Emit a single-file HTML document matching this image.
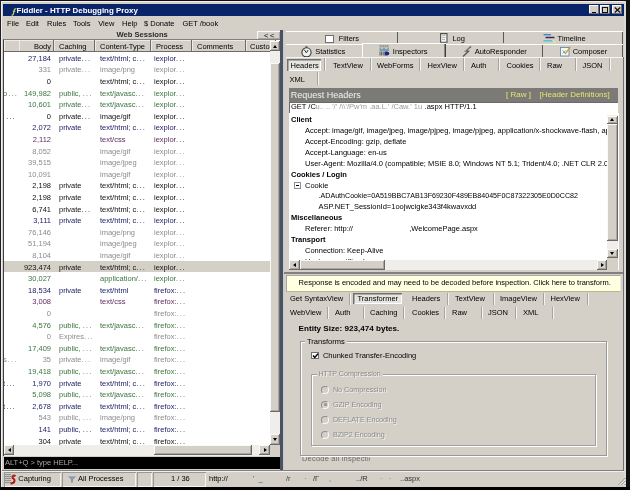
<!DOCTYPE html>
<html><head><meta charset="utf-8">
<style>
html,body{margin:0;padding:0;width:630px;height:490px;overflow:hidden;background:#000;}
*{box-sizing:border-box;}
#w{will-change:transform;position:absolute;left:0;top:0;width:630px;height:490px;background:#d4d0c8;font-family:"Liberation Sans",sans-serif;font-size:7.5px;color:#000;overflow:hidden;}
.a{position:absolute;}
.t{position:absolute;white-space:pre;line-height:12px;height:12px;}
.b{font-weight:bold;}
.raised{box-shadow:inset -1px -1px #6a6a6a, inset 1px 1px #fafafa, inset -2px -2px #a8a6a0;background:#d4d0c8;}
.sunk{box-shadow:inset 1px 1px #9a9892, inset -1px -1px #f4f4f0;}
/* list */
#list{position:absolute;left:3px;top:39px;width:278px;height:417px;background:#fff;border-left:1px solid #404040;border-top:1px solid #808080;overflow:hidden;}
.r{position:absolute;left:0;width:266px;height:11.62px;line-height:13.2px;white-space:pre;}
.r span{position:absolute;top:0;overflow:hidden;}
.c0{left:-1px;width:15px;letter-spacing:1.1px;}
.c1{left:15px;width:32px;text-align:right;}
.c2{left:55px;width:38px;}
.c3{left:96px;width:52px;}
.c4{left:150px;width:46px;}
.r i{font-style:normal;letter-spacing:1.1px;}
.n{color:#22226a;} .g{color:#8c8c8c;} .k{color:#101010;} .e{color:#3c7440;} .p{color:#5e2c5e;}
.s{background:#d4d0c8;color:#101010;}
.hd{position:absolute;top:0;height:12px;line-height:14px;white-space:pre;background:#d4d0c8;box-shadow:inset -1px -1px #6c6c6c, inset 1px 1px #ecebe6;}
.arrow{position:absolute;width:0;height:0;}
.tab{position:absolute;white-space:pre;}
.sep{position:absolute;width:1px;background:#a4a4a0;box-shadow:1px 0 #f4f4f4;}
</style></head><body>
<div id="w">
  <!-- outer frame -->
  <div class="a" style="left:0;top:0;width:630px;height:1px;background:#101010"></div>
  <div class="a" style="left:0;top:0;width:1px;height:490px;background:#202020"></div>
  <div class="a" style="left:626px;top:0;width:4px;height:490px;background:#101010"></div>
  <div class="a" style="left:0;top:487px;width:630px;height:3px;background:#000"></div>
  <div class="a" style="left:1px;top:1px;width:1px;height:486px;background:#f0f0f0"></div>
  <div class="a" style="left:1px;top:1px;width:625px;height:1px;background:#f0f0f0"></div>
  <div class="a" style="left:624.3px;top:1px;width:1.7px;height:486px;background:#dcdad4"></div>

  <!-- title bar -->
  <div class="a" style="left:3px;top:4px;width:621px;height:12px;background:#0a246a"></div>
  <svg class="a" style="left:10.5px;top:8px" width="6" height="8" viewBox="0 0 6 8"><path d="M5.3 0.9 C4.2 0.4 3.5 1.2 3.2 2.4 L2.4 5.8 C2.1 7 1.4 7.3 0.5 7" stroke="#c8d868" stroke-width="1.2" fill="none"/><path d="M1.8 3.3 L4.4 3.3" stroke="#c8d868" stroke-width="0.9"/></svg>
  <div class="t b" style="left:16.6px;top:4.6px;color:#fff;font-size:7.9px">Fiddler - HTTP Debugging Proxy</div>
  <div class="a raised" style="left:589px;top:5px;width:9.7px;height:9.3px;box-shadow:inset -1px -1px #707070, inset 1px 1px #fff"></div>
  <div class="a" style="left:592px;top:11.6px;width:4px;height:1.4px;background:#000"></div>
  <div class="a raised" style="left:600px;top:5px;width:9.7px;height:9.3px;box-shadow:inset -1px -1px #707070, inset 1px 1px #fff"></div>
  <div class="a" style="left:602px;top:7px;width:6px;height:5.8px;border:1.1px solid #101010;border-top-width:1.8px"></div>
  <div class="a raised" style="left:611.7px;top:5px;width:10.6px;height:9.3px;box-shadow:inset -1px -1px #707070, inset 1px 1px #fff"></div>
  <svg class="a" style="left:614.2px;top:6.8px" width="7" height="6" viewBox="0 0 7 6"><path d="M0.8 0.5 L6.2 5.5 M6.2 0.5 L0.8 5.5" stroke="#101010" stroke-width="1.2"/></svg>

  <!-- menu -->
  <div class="t" style="left:7px;top:17.5px">File</div>
  <div class="t" style="left:26px;top:17.5px">Edit</div>
  <div class="t" style="left:47px;top:17.5px">Rules</div>
  <div class="t" style="left:73px;top:17.5px">Tools</div>
  <div class="t" style="left:98.2px;top:17.5px">View</div>
  <div class="t" style="left:122px;top:17.5px">Help</div>
  <div class="t" style="left:144px;top:17.5px">$ Donate</div>
  <div class="t" style="left:182.5px;top:17.5px">GET /book</div>

  <!-- web sessions caption -->
  <div class="t b" style="left:116.5px;top:29.3px;font-size:7.6px;color:#2a2a2a">Web Sessions</div>
  <div class="a raised" style="left:257px;top:30.5px;width:24px;height:9px"></div>
  <div class="t" style="left:264px;top:30.5px;font-size:7.5px;line-height:10px;letter-spacing:1.5px">&lt;&lt;</div>

  <!-- sessions list -->
  <div id="list">
    <div class="hd" style="left:0;width:16px"></div>
    <div class="hd" style="left:15px;width:35px;text-align:right;padding-right:3px">Body</div>
    <div class="hd" style="left:50px;width:41px;padding-left:5px">Caching</div>
    <div class="hd" style="left:91px;width:56px;padding-left:5px">Content-Type</div>
    <div class="hd" style="left:147px;width:41px;padding-left:5px">Process</div>
    <div class="hd" style="left:188px;width:54px;padding-left:5px">Comments</div>
    <div class="hd" style="left:242px;width:30px;padding-left:4px">Custo</div>
<div class="r n" style="top:11.80px"><span class="c0"></span><span class="c1">27,184</span><span class="c2">private<i>...</i></span><span class="c3">text/html; c<i>...</i></span><span class="c4">iexplor<i>...</i></span></div>
<div class="r g" style="top:23.40px"><span class="c0"></span><span class="c1">331</span><span class="c2">private<i>...</i></span><span class="c3">image/png</span><span class="c4">iexplor<i>...</i></span></div>
<div class="r k" style="top:35.00px"><span class="c0"></span><span class="c1">0</span><span class="c2"></span><span class="c3">text/html; c<i>...</i></span><span class="c4">iexplor<i>...</i></span></div>
<div class="r e" style="top:46.60px"><span class="c0">o<i>...</i></span><span class="c1">149,982</span><span class="c2">public, <i>...</i></span><span class="c3">text/javasc<i>...</i></span><span class="c4">iexplor<i>...</i></span></div>
<div class="r e" style="top:58.20px"><span class="c0"></span><span class="c1">10,601</span><span class="c2">private<i>...</i></span><span class="c3">text/javasc<i>...</i></span><span class="c4">iexplor<i>...</i></span></div>
<div class="r k" style="top:69.80px"><span class="c0"> <i>...</i></span><span class="c1">0</span><span class="c2">private<i>...</i></span><span class="c3">image/gif</span><span class="c4">iexplor<i>...</i></span></div>
<div class="r n" style="top:81.40px"><span class="c0"></span><span class="c1">2,072</span><span class="c2">private</span><span class="c3">text/html; c<i>...</i></span><span class="c4">iexplor<i>...</i></span></div>
<div class="r p" style="top:93.00px"><span class="c0"></span><span class="c1">2,112</span><span class="c2"></span><span class="c3">text/css</span><span class="c4">iexplor<i>...</i></span></div>
<div class="r g" style="top:104.60px"><span class="c0"></span><span class="c1">8,052</span><span class="c2"></span><span class="c3">image/gif</span><span class="c4">iexplor<i>...</i></span></div>
<div class="r g" style="top:116.20px"><span class="c0"></span><span class="c1">39,515</span><span class="c2"></span><span class="c3">image/jpeg</span><span class="c4">iexplor<i>...</i></span></div>
<div class="r g" style="top:127.80px"><span class="c0"></span><span class="c1">10,091</span><span class="c2"></span><span class="c3">image/gif</span><span class="c4">iexplor<i>...</i></span></div>
<div class="r k" style="top:139.40px"><span class="c0"></span><span class="c1">2,198</span><span class="c2">private</span><span class="c3">text/html; c<i>...</i></span><span class="c4">iexplor<i>...</i></span></div>
<div class="r k" style="top:151.00px"><span class="c0"></span><span class="c1">2,198</span><span class="c2">private</span><span class="c3">text/html; c<i>...</i></span><span class="c4">iexplor<i>...</i></span></div>
<div class="r k" style="top:162.60px"><span class="c0"></span><span class="c1">6,741</span><span class="c2">private<i>...</i></span><span class="c3">text/html; c<i>...</i></span><span class="c4">iexplor<i>...</i></span></div>
<div class="r n" style="top:174.20px"><span class="c0"></span><span class="c1">3,111</span><span class="c2">private</span><span class="c3">text/html; c<i>...</i></span><span class="c4">iexplor<i>...</i></span></div>
<div class="r g" style="top:185.80px"><span class="c0"></span><span class="c1">76,146</span><span class="c2"></span><span class="c3">image/png</span><span class="c4">iexplor<i>...</i></span></div>
<div class="r g" style="top:197.40px"><span class="c0"></span><span class="c1">51,194</span><span class="c2"></span><span class="c3">image/jpeg</span><span class="c4">iexplor<i>...</i></span></div>
<div class="r g" style="top:209.00px"><span class="c0"></span><span class="c1">8,104</span><span class="c2"></span><span class="c3">image/gif</span><span class="c4">iexplor<i>...</i></span></div>
<div class="r s" style="top:220.60px"><span class="c0"></span><span class="c1">923,474</span><span class="c2">private</span><span class="c3">text/html; c<i>...</i></span><span class="c4">iexplor<i>...</i></span></div>
<div class="r e" style="top:232.20px"><span class="c0"></span><span class="c1">30,027</span><span class="c2"></span><span class="c3">application/<i>...</i></span><span class="c4">iexplor<i>...</i></span></div>
<div class="r n" style="top:243.80px"><span class="c0"></span><span class="c1">18,534</span><span class="c2">private</span><span class="c3">text/html</span><span class="c4">firefox:<i>...</i></span></div>
<div class="r p" style="top:255.40px"><span class="c0"></span><span class="c1">3,008</span><span class="c2"></span><span class="c3">text/css</span><span class="c4">firefox:<i>...</i></span></div>
<div class="r g" style="top:267.00px"><span class="c0"></span><span class="c1">0</span><span class="c2"></span><span class="c3"></span><span class="c4">firefox:<i>...</i></span></div>
<div class="r e" style="top:278.60px"><span class="c0"></span><span class="c1">4,576</span><span class="c2">public, <i>...</i></span><span class="c3">text/javasc<i>...</i></span><span class="c4">firefox:<i>...</i></span></div>
<div class="r g" style="top:290.20px"><span class="c0"></span><span class="c1">0</span><span class="c2">Expires<i>...</i></span><span class="c3"></span><span class="c4">firefox:<i>...</i></span></div>
<div class="r e" style="top:301.80px"><span class="c0"></span><span class="c1">17,409</span><span class="c2">public, <i>...</i></span><span class="c3">text/javasc<i>...</i></span><span class="c4">firefox:<i>...</i></span></div>
<div class="r g" style="top:313.40px"><span class="c0">s<i>...</i></span><span class="c1">35</span><span class="c2">private<i>...</i></span><span class="c3">image/gif</span><span class="c4">firefox:<i>...</i></span></div>
<div class="r e" style="top:325.00px"><span class="c0"></span><span class="c1">19,418</span><span class="c2">public, <i>...</i></span><span class="c3">text/javasc<i>...</i></span><span class="c4">firefox:<i>...</i></span></div>
<div class="r n" style="top:336.60px"><span class="c0">t<i>...</i></span><span class="c1">1,970</span><span class="c2">private</span><span class="c3">text/html; c<i>...</i></span><span class="c4">firefox:<i>...</i></span></div>
<div class="r e" style="top:348.20px"><span class="c0"></span><span class="c1">5,098</span><span class="c2">public, <i>...</i></span><span class="c3">text/javasc<i>...</i></span><span class="c4">firefox:<i>...</i></span></div>
<div class="r n" style="top:359.80px"><span class="c0">t<i>...</i></span><span class="c1">2,678</span><span class="c2">private</span><span class="c3">text/html; c<i>...</i></span><span class="c4">firefox:<i>...</i></span></div>
<div class="r g" style="top:371.40px"><span class="c0"></span><span class="c1">543</span><span class="c2">public, <i>...</i></span><span class="c3">image/png</span><span class="c4">firefox:<i>...</i></span></div>
<div class="r n" style="top:383.00px"><span class="c0"></span><span class="c1">141</span><span class="c2">public, <i>...</i></span><span class="c3">text/html; c<i>...</i></span><span class="c4">firefox:<i>...</i></span></div>
<div class="r k" style="top:394.60px"><span class="c0"></span><span class="c1">304</span><span class="c2">private</span><span class="c3">text/html; c<i>...</i></span><span class="c4">firefox:<i>...</i></span></div>
    <!-- vscroll -->
    <div class="a" style="left:266px;top:1px;width:11px;height:404px;background:#efeeea"></div>
    <div class="a raised" style="left:266px;top:1px;width:10px;height:10px"></div>
    <div class="a" style="left:269px;top:4.5px;width:0;height:0;border-left:2.5px solid transparent;border-right:2.5px solid transparent;border-bottom:3px solid #000"></div>
    <div class="a raised" style="left:266px;top:23px;width:10px;height:349px"></div>
    <div class="a raised" style="left:266px;top:394px;width:10px;height:10.8px"></div>
    <div class="a" style="left:269px;top:398px;width:0;height:0;border-left:2.5px solid transparent;border-right:2.5px solid transparent;border-top:3px solid #000"></div>
    <!-- hscroll -->
    <div class="a" style="left:0;top:404.8px;width:277px;height:12.2px;background:#efeeea"></div>
    <div class="a raised" style="left:0;top:404.8px;width:10px;height:10.7px"></div>
    <div class="a" style="left:3.5px;top:408px;width:0;height:0;border-top:2.5px solid transparent;border-bottom:2.5px solid transparent;border-right:3px solid #000"></div>
    <div class="a raised" style="left:150px;top:404.8px;width:98px;height:10.7px"></div>
    <div class="a raised" style="left:255px;top:404.8px;width:11px;height:10.7px"></div>
    <div class="a" style="left:259.5px;top:408px;width:0;height:0;border-top:2.5px solid transparent;border-bottom:2.5px solid transparent;border-left:3px solid #000"></div>
    <div class="a" style="left:266px;top:404.8px;width:12px;height:12.2px;background:#d4d0c8"></div>
  </div>
  <!-- splitter -->
  <div class="a" style="left:280px;top:30px;width:3px;height:441px;background:#4a5262"></div><div class="a" style="left:283px;top:30px;width:2px;height:441px;background:linear-gradient(90deg,#c4c8d0,#d4d0c8)"></div>

  <!-- quickexec -->
  <div class="a" style="left:4px;top:457px;width:276px;height:11.8px;background:#000"></div>
  <div class="t" style="left:5px;top:456.8px;color:#a8a8a8">ALT+Q &gt; type HELP...</div>

  <!-- status bar -->
  <div class="a" style="left:2px;top:470px;width:622px;height:1px;background:#808080"></div><div class="a" style="left:2px;top:471px;width:622px;height:1px;background:#f0f0f0"></div>
  <div class="a sunk" style="left:4px;top:472px;width:57px;height:15px"></div>
  <svg class="a" style="left:4px;top:473px" width="13" height="12" viewBox="0 0 13 12"><path d="M1 1.5h6M1 3.5h6M1 5.5h6M1 7.5h6M1 9.5h6" stroke="#8a8a8a" stroke-width="1"/><path d="M2.5 1v10M5 1v10" stroke="#b0b0b0" stroke-width="0.6"/><path d="M11.5 3 C9.5 2 8 3 8.5 4.5 C9 6 11 6 10.5 8 C10 10 8 10.5 6.5 10.5" stroke="#b01818" stroke-width="2" fill="none"/></svg>
  <div class="t" style="left:18.3px;top:473px">Capturing</div>
  <div class="a sunk" style="left:62px;top:472px;width:74px;height:15px"></div>
  <svg class="a" style="left:67px;top:475px" width="10" height="8" viewBox="0 0 10 8"><path d="M0.5 1 L9.5 1 L6 4.5 L6 7.5 L4 7.5 L4 4.5 Z" fill="#8a98b0"/><path d="M0.5 1 L9.5 1" stroke="#c8d0e0" stroke-width="0.8"/></svg>
  <div class="t" style="left:78px;top:473px">All Processes</div>
  <div class="a sunk" style="left:137px;top:472px;width:15px;height:15px"></div>
  <div class="a sunk" style="left:153px;top:472px;width:53px;height:15px"></div>
  <div class="t" style="left:171px;top:473px">1 / 36</div>
  <div class="t" style="left:209px;top:473px">http://</div>
  <div class="t" style="left:253px;top:473px;color:#555">'  _</div>
  <div class="t" style="left:286px;top:473px;color:#444">/r</div>
  <div class="t" style="left:304px;top:473px;color:#777">·</div>
  <div class="t" style="left:313px;top:473px;color:#333">/Γ</div>
  <div class="t" style="left:329px;top:473px;color:#777">,</div>
  <div class="t" style="left:356px;top:473px;color:#333">../R</div>
  <div class="t" style="left:380px;top:473px;color:#888">·   ·</div>
  <div class="t" style="left:400px;top:473px;color:#333">..aspx</div>
  <svg class="a" style="left:617px;top:476px" width="9" height="10" viewBox="0 0 9 10"><path d="M8.5 2 L1.5 9 M8.5 5 L4.5 9 M8.5 8 L7.5 9" stroke="#808080" stroke-width="1"/><path d="M8.5 3 L2.5 9 M8.5 6 L5.5 9" stroke="#fff" stroke-width="0.8"/></svg>

    <!-- RIGHT PANEL -->
  <!-- tab row 1 -->
  <div class="a" style="left:285.5px;top:31px;width:337px;height:13px;background:#d4d0c8;box-shadow:inset 0 1px #fff"></div>
  <div class="a" style="left:397px;top:32px;width:1.2px;height:11px;background:#5a5a5a"></div>
  <div class="a" style="left:503.2px;top:32px;width:1.2px;height:11px;background:#5a5a5a"></div>
  <div class="a" style="left:621.8px;top:32px;width:1.2px;height:12px;background:#5a5a5a"></div>
  <div class="a" style="left:325.3px;top:34.5px;width:9px;height:8.5px;background:#fff;border:1px solid #707070"></div>
  <div class="t" style="left:338.7px;top:32.7px">Filters</div>
  <svg class="a" style="left:439.5px;top:33px" width="8" height="10" viewBox="0 0 8 10"><path d="M0.6 0.6 H7 V9.2 H0.6 Z" fill="#f4f4f4" stroke="#505050" stroke-width="1.1"/><path d="M2 2.5h3.5M2 4.5h3.5M2 6.5h3" stroke="#a8a8a8" stroke-width="0.8"/></svg>
  <div class="t" style="left:452.4px;top:33px">Log</div>
  <svg class="a" style="left:542.5px;top:33px" width="14" height="11" viewBox="0 0 14 11"><path d="M0.5 1.7h7.5" stroke="#4a84c8" stroke-width="1.4"/><path d="M2.5 4.5h9" stroke="#4a2058" stroke-width="1.5"/><path d="M0.5 7.8h10" stroke="#50c8c8" stroke-width="1.5"/><path d="M9.5 7 l3 3" stroke="#d8e8b0" stroke-width="1.5"/></svg>
  <div class="t" style="left:557.6px;top:33px">Timeline</div>
  <!-- tab row 2 -->
  <div class="a" style="left:285.5px;top:44px;width:337px;height:13.5px;background:#d4d0c8;box-shadow:inset 0 1px #fff"></div>
  <div class="a" style="left:362px;top:43px;width:83.5px;height:15px;background:#d4d0c8;box-shadow:inset 1px 1px #fff, inset -1.5px 0 #404040"></div>
  <div class="a" style="left:542.2px;top:44.5px;width:1.2px;height:13px;background:#5a5a5a"></div>
  <div class="a" style="left:621.8px;top:44.5px;width:1.2px;height:13px;background:#5a5a5a"></div>
  <svg class="a" style="left:301px;top:45.5px" width="12" height="12" viewBox="0 0 12 12"><circle cx="5.5" cy="6.3" r="4.6" fill="#eef2ea" stroke="#383838" stroke-width="1.1"/><path d="M3.2 3.6 L5.4 6.8 L7.2 4" stroke="#303030" stroke-width="1" fill="none"/><path d="M4.6 1 h1.8" stroke="#303030" stroke-width="1.2"/></svg>
  <div class="t" style="left:315.2px;top:46.3px">Statistics</div>
  <svg class="a" style="left:378.7px;top:44.8px" width="11" height="11" viewBox="0 0 11 11"><path d="M0.5 1h9.5" stroke="#505050" stroke-width="1" stroke-dasharray="1.2 0.6"/><rect x="0.5" y="2.5" width="9.5" height="3.5" fill="#7aa0ac"/><path d="M2 3.2h2M6 3.2h2.5" stroke="#d8e8ec" stroke-width="0.9"/><path d="M1 6.5v4M2.6 6.5v4M4.2 6.5v4" stroke="#505058" stroke-width="0.9"/><path d="M5.5 6.5 h3 q1.8 0.5 1.8 2 q0 2 -2.5 2 h-2.3z" fill="#20287a"/></svg>
  <div class="t" style="left:392.8px;top:45.5px">Inspectors</div>
  <svg class="a" style="left:462px;top:45.5px" width="10" height="11" viewBox="0 0 10 11"><path d="M9 0.5 L3.5 5 L6.5 5.2 L1 10.5" stroke="#555" stroke-width="1.3" fill="none"/><path d="M7.5 1 L2.5 5.5" stroke="#b0b0b0" stroke-width="1"/></svg>
  <div class="t" style="left:474.7px;top:46.3px">AutoResponder</div>
  <svg class="a" style="left:559.5px;top:46px" width="12" height="11" viewBox="0 0 12 11"><rect x="0.5" y="1.5" width="8.5" height="8.5" fill="#f4f6f8" stroke="#7088a8" stroke-width="0.9"/><path d="M2.5 4.5 L5.5 7.5 M5.5 4.5 L2.5 7.5" stroke="#80a860" stroke-width="0.9"/><path d="M5 8 L10.5 0.8" stroke="#c8a040" stroke-width="1.3"/><path d="M9.5 0.5 L11 1.8" stroke="#e0a0b0" stroke-width="1"/></svg>
  <div class="t" style="left:572.7px;top:46.3px">Composer</div>
  <div class="a" style="left:623px;top:57px;width:1.3px;height:414px;background:#707070"></div>
  <div class="a" style="left:285.5px;top:57px;width:337.5px;height:1px;background:#f4f4f4"></div>
  <!-- tab row 3 (inspector sub tabs) -->
  <div class="a" style="left:286.7px;top:59.3px;width:34.5px;height:11.5px;background:#e6e4df;box-shadow:inset 1.5px 1.5px #707070, inset -1px -1px #fff"></div>
  <div class="t" style="left:290.5px;top:60px">Headers</div>
  <div class="sep" style="left:323.8px;top:58px;height:13px"></div>
  <div class="t" style="left:333px;top:60px">TextView</div>
  <div class="sep" style="left:370px;top:58px;height:13px"></div>
  <div class="t" style="left:377px;top:60px">WebForms</div>
  <div class="sep" style="left:419.3px;top:58px;height:13px"></div>
  <div class="t" style="left:427.5px;top:60px">HexView</div>
  <div class="sep" style="left:462.7px;top:58px;height:13px"></div>
  <div class="t" style="left:471px;top:60px">Auth</div>
  <div class="sep" style="left:498.3px;top:58px;height:13px"></div>
  <div class="t" style="left:506.5px;top:60px">Cookies</div>
  <div class="sep" style="left:538.5px;top:58px;height:13px"></div>
  <div class="t" style="left:547px;top:60px">Raw</div>
  <div class="sep" style="left:574.6px;top:58px;height:13px"></div>
  <div class="t" style="left:582.5px;top:60px">JSON</div>
  <div class="sep" style="left:609.0px;top:58px;height:13px"></div>
  <div class="t" style="left:289.5px;top:74.3px">XML</div>
  <div class="sep" style="left:317px;top:72px;height:13px"></div>

  <!-- request headers -->
  <div class="a" style="left:288.8px;top:88px;width:329.7px;height:13.6px;background:#7b7a77"></div>
  <div class="t" style="left:290.7px;top:89px;font-size:9px;color:#f4f4f4">Request Headers</div>
  <div class="t" style="left:506px;top:89px;color:#e4e470;font-size:8px">[ Raw ]</div>
  <div class="t" style="left:539.5px;top:89px;color:#e4e470;font-size:8px">[Header Definitions]</div>
  <div class="a" style="left:288.8px;top:101.6px;width:329.7px;height:11.4px;background:#fff;border-left:1px solid #6a6a6a;border-top:1px solid #6a6a6a"></div>
  <div class="t" style="left:291px;top:101px">GET /C</div><div class="t" style="left:315.5px;top:101px;color:#9a9a9a;letter-spacing:0px">u.. .. '/' /\\'/Pw'm .aa.L.' /Caw.' 1u</div><div class="t" style="left:424.6px;top:101px">.aspx HTTP/1.1</div>
  <div class="a" style="left:288.5px;top:113px;width:330px;height:157px;background:#fff"></div>
  <div class="t b" style="left:291px;top:114.3px">Client</div>
  <div class="t" style="left:305px;top:125.4px">Accept: image/gif, image/jpeg, image/pjpeg, image/pjpeg, application/x-shockwave-flash, ap</div>
  <div class="t" style="left:305px;top:136.3px">Accept-Encoding: gzip, deflate</div>
  <div class="t" style="left:305px;top:147.2px">Accept-Language: en-us</div>
  <div class="t" style="left:305px;top:158.3px">User-Agent: Mozilla/4.0 (compatible; MSIE 8.0; Windows NT 5.1; Trident/4.0; .NET CLR 2.0.</div>
  <div class="t b" style="left:291px;top:168.7px">Cookies / Login</div>
  <div class="a" style="left:294px;top:182.4px;width:6.5px;height:6.5px;border:1px solid #909090;background:#fff"></div>
  <div class="a" style="left:295.5px;top:185.2px;width:3.5px;height:1px;background:#000"></div>
  <div class="t" style="left:305px;top:179.6px">Cookie</div>
  <div class="t" style="left:318.6px;top:190.2px;font-size:7.1px">.ADAuthCookie=0A519BBC7AB13F69230F489EB84045F0C87322305E0D0CC82</div>
  <div class="t" style="left:318.6px;top:201.4px">ASP.NET_SessionId=1oojwcigke343f4kwavxdd</div>
  <div class="t b" style="left:291px;top:212.4px">Miscellaneous</div>
  <div class="t" style="left:305px;top:223.4px">Referer: http://                           ,WelcomePage.aspx</div>
  <div class="t b" style="left:291px;top:234.4px">Transport</div>
  <div class="t" style="left:305px;top:245.3px">Connection: Keep-Alive</div>
  <div class="t" style="left:305px;top:255.8px">Host: wwe.oiflimsky.com</div>
  <!-- tree scrollbars -->
  <div class="a" style="left:607px;top:115px;width:11px;height:143px;background:#efeeea"></div>
  <div class="a raised" style="left:607px;top:115.5px;width:11px;height:8.5px"></div>
  <div class="a" style="left:610px;top:118px;width:0;height:0;border-left:2.5px solid transparent;border-right:2.5px solid transparent;border-bottom:3px solid #000"></div>
  <div class="a raised" style="left:607px;top:124px;width:11px;height:117px"></div>
  <div class="a raised" style="left:607px;top:249px;width:11px;height:9px"></div>
  <div class="a" style="left:610px;top:252px;width:0;height:0;border-left:2.5px solid transparent;border-right:2.5px solid transparent;border-top:3px solid #000"></div>
  <div class="a" style="left:288.5px;top:259.5px;width:318.5px;height:10.5px;background:#efeeea"></div>
  <div class="a raised" style="left:288.5px;top:259.5px;width:11px;height:10.5px"></div>
  <div class="a" style="left:292.5px;top:262.5px;width:0;height:0;border-top:2.5px solid transparent;border-bottom:2.5px solid transparent;border-right:3px solid #000"></div>
  <div class="a raised" style="left:299.5px;top:259.5px;width:85px;height:10.5px"></div>
  <div class="a raised" style="left:596.8px;top:259.5px;width:10.5px;height:10.5px"></div>
  <div class="a" style="left:601px;top:262.5px;width:0;height:0;border-top:2.5px solid transparent;border-bottom:2.5px solid transparent;border-left:3px solid #000"></div>
  <div class="a" style="left:607px;top:258px;width:11px;height:12px;background:#d4d0c8"></div>
  <!-- panel frames -->
  

  <!-- yellow info bar -->
  <div class="a" style="left:284px;top:272px;width:339px;height:2px;background:#808080"></div>
  <div class="a" style="left:286.4px;top:275px;width:335px;height:17px;background:#ffffe1;border:1px solid #a8a898;border-right-color:#e8e8d8;border-bottom-color:#b8b890"></div>
  <div class="t" style="left:298.6px;top:277px">Response is encoded and may need to be decoded before inspection. Click here to transform.</div>

  <!-- response tabs -->
  <div class="t" style="left:290px;top:292.5px">Get SyntaxView</div>
  <div class="sep" style="left:349px;top:293px;height:12px"></div>
  <div class="a" style="left:353px;top:292.5px;width:48.5px;height:11px;background:#e6e4df;box-shadow:inset 1.5px 1.5px #707070, inset -1px -1px #fff"></div>
  <div class="t" style="left:357.5px;top:293px">Transformer</div>
  <div class="t" style="left:412px;top:292.5px">Headers</div>
  <div class="sep" style="left:447px;top:293px;height:12px"></div>
  <div class="t" style="left:455px;top:292.5px">TextView</div>
  <div class="sep" style="left:492.8px;top:293px;height:12px"></div>
  <div class="t" style="left:500px;top:292.5px">ImageView</div>
  <div class="sep" style="left:542.5px;top:293px;height:12px"></div>
  <div class="t" style="left:550.5px;top:292.5px">HexView</div>
  <div class="sep" style="left:587px;top:293px;height:12px"></div>
  <div class="t" style="left:290px;top:306.8px">WebView</div>
  <div class="sep" style="left:327px;top:306.8px;height:12px"></div>
  <div class="t" style="left:335px;top:306.8px">Auth</div>
  <div class="sep" style="left:363px;top:306.8px;height:12px"></div>
  <div class="t" style="left:370px;top:306.8px">Caching</div>
  <div class="sep" style="left:403px;top:306.8px;height:12px"></div>
  <div class="t" style="left:412px;top:306.8px">Cookies</div>
  <div class="sep" style="left:444px;top:306.8px;height:12px"></div>
  <div class="t" style="left:452px;top:306.8px">Raw</div>
  <div class="sep" style="left:480.7px;top:306.8px;height:12px"></div>
  <div class="t" style="left:488px;top:306.8px">JSON</div>
  <div class="sep" style="left:515.4px;top:306.8px;height:12px"></div>
  <div class="t" style="left:523px;top:306.8px">XML</div>
  <div class="sep" style="left:551.6px;top:306.8px;height:12px"></div>

  <div class="t b" style="left:298.6px;top:323.2px;font-size:8.1px">Entity Size: 923,474 bytes.</div>
  <!-- Transforms group -->
  <div class="a" style="left:300px;top:341px;width:307px;height:114.5px;border:1px solid #989898;box-shadow:1px 1px #fff, inset 1px 1px #fff"></div>
  <div class="a" style="left:305px;top:336px;width:42px;height:10px;background:#d4d0c8"></div>
  <div class="t" style="left:307px;top:335.8px">Transforms</div>
  <div class="a" style="left:310.9px;top:352.3px;width:7.7px;height:7.2px;background:#fff;border:1px solid #707070"></div>
  <svg class="a" style="left:311.5px;top:353px" width="7" height="6" viewBox="0 0 7 6"><path d="M1 2.5 L2.8 4.5 L6 0.8" stroke="#000" stroke-width="1.4" fill="none"/></svg>
  <div class="t" style="left:322.9px;top:350.3px">Chunked Transfer-Encoding</div>
  <!-- HTTP Compression group -->
  <div class="a" style="left:310.9px;top:373.7px;width:285.5px;height:72px;border:1px solid #a0a0a0;box-shadow:1px 1px #fff, inset 1px 1px #fff"></div>
  <div class="a" style="left:316.5px;top:369px;width:66px;height:10px;background:#d4d0c8"></div>
  <div class="t" style="left:318.5px;top:368px;color:#8a8a8a;text-shadow:0.8px 0.8px #f4f4f4;font-size:7.1px">HTTP Compression</div>
  <div class="a" style="left:321.4px;top:386.3px;width:7.5px;height:7.5px;border-radius:50%;border:1px solid #909090;border-right-color:#f8f8f8;border-bottom-color:#f8f8f8"></div>
  <div class="t" style="left:332.9px;top:384px;color:#8c8c8c;text-shadow:0.8px 0.8px #f4f4f4;font-size:7.2px">No Compression</div>
  <div class="a" style="left:321.4px;top:401.2px;width:7.5px;height:7.5px;border-radius:50%;border:1px solid #909090;border-right-color:#f8f8f8;border-bottom-color:#f8f8f8"></div>
  <div class="a" style="left:323.6px;top:403.4px;width:3px;height:3px;border-radius:50%;background:#909090"></div>
  <div class="t" style="left:332.9px;top:398.9px;color:#8c8c8c;text-shadow:0.8px 0.8px #f4f4f4;font-size:7.2px">GZIP Encoding</div>
  <div class="a" style="left:321.4px;top:416.3px;width:7.5px;height:7.5px;border-radius:50%;border:1px solid #909090;border-right-color:#f8f8f8;border-bottom-color:#f8f8f8"></div>
  <div class="t" style="left:332.9px;top:414px;color:#8c8c8c;text-shadow:0.8px 0.8px #f4f4f4;font-size:7.2px">DEFLATE Encoding</div>
  <div class="a" style="left:321.4px;top:431.3px;width:7.5px;height:7.5px;border-radius:50%;border:1px solid #909090;border-right-color:#f8f8f8;border-bottom-color:#f8f8f8"></div>
  <div class="t" style="left:332.9px;top:429px;color:#8c8c8c;text-shadow:0.8px 0.8px #f4f4f4;font-size:7.2px">BZIP2 Encoding</div>
  <div class="a" style="left:300px;top:456.5px;width:70px;height:7px;overflow:hidden"><div class="t" style="left:2px;top:-3.8px;color:#6a6a6a;letter-spacing:0.2px">Decode all inspection</div></div>
  <!-- response panel frame -->
  

</div>
</body></html>
